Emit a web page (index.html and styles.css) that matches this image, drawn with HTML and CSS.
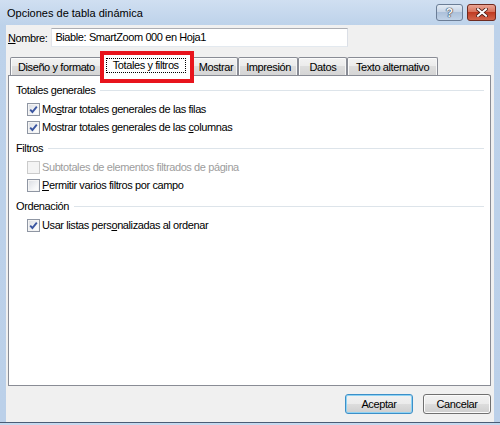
FILE: index.html
```html
<!DOCTYPE html>
<html lang="es">
<head>
<meta charset="utf-8">
<title>Opciones de tabla dinámica</title>
<link rel="stylesheet" href="styles.css">
</head>
<body>
<div class="window">
  <div class="titlebar">
    <span class="title">Opciones de tabla dinámica</span>
    <span class="ctl ctl-help"><span class="help-mark">?</span></span>
    <span class="ctl ctl-close"><svg width="12" height="9" viewBox="0 0 12 9"><path d="M2 1.2 L10 7.8 M10 1.2 L2 7.8" stroke="#4a1d16" stroke-width="3.6" stroke-linecap="square" fill="none"/><path d="M2 1.2 L10 7.8 M10 1.2 L2 7.8" stroke="#ffffff" stroke-width="2" stroke-linecap="square" fill="none"/></svg></span>
  </div>
  <div class="client">
    <div class="name-row">
      <span class="label"><u>N</u>ombre:</span>
      <div class="textbox">Biable: SmartZoom 000 en Hoja1</div>
    </div>
    <div class="tabs">
      <div class="tab">Diseño y formato</div>
      <div class="tab selected"><span class="focus">Totales y filtros</span><span class="highlight"></span></div>
      <div class="tab tab-compact">Mostrar</div>
      <div class="tab">Impresión</div>
      <div class="tab">Datos</div>
      <div class="tab tab-wide">Texto alternativo</div>
    </div>
    <div class="panel">
      <div class="group">
        <div class="group-head"><span>Totales generales</span><span class="rule"></span></div>
        <div class="row"><span class="box checked"><svg width="11" height="11" viewBox="0 0 11 11"><path d="M2.2 5.6 L4.4 8 L8.8 2.6" stroke="#3a55a0" stroke-width="1.9" fill="none"/></svg></span><span>Mo<u>s</u>trar totales generales de las filas</span></div>
        <div class="row"><span class="box checked"><svg width="11" height="11" viewBox="0 0 11 11"><path d="M2.2 5.6 L4.4 8 L8.8 2.6" stroke="#3a55a0" stroke-width="1.9" fill="none"/></svg></span><span>Mostrar totales generales de las <u>c</u>olumnas</span></div>
      </div>
      <div class="group">
        <div class="group-head"><span>Filtros</span><span class="rule"></span></div>
        <div class="row disabled"><span class="box"></span><span>Subtotales de elementos filtrados de página</span></div>
        <div class="row"><span class="box"></span><span><u>P</u>ermitir varios filtros por campo</span></div>
      </div>
      <div class="group">
        <div class="group-head"><span>Ordenación</span><span class="rule"></span></div>
        <div class="row"><span class="box checked"><svg width="11" height="11" viewBox="0 0 11 11"><path d="M2.2 5.6 L4.4 8 L8.8 2.6" stroke="#3a55a0" stroke-width="1.9" fill="none"/></svg></span><span>Usar listas pers<u>o</u>nalizadas al ordenar</span></div>
      </div>
    </div>
    <div class="buttons">
      <div class="btn default">Aceptar</div>
      <div class="btn">Cancelar</div>
    </div>
  </div>
</div>
</body>
</html>
```
FILE: styles.css
```css
* { box-sizing: border-box; }
html, body { margin: 0; padding: 0; }
body {
  width: 500px;
  height: 425px;
  overflow: hidden;
  background: #c6d9ee;
  font-family: "Liberation Sans", Arial, sans-serif;
  font-size: 11px;
  letter-spacing: -0.4px;
  color: #000;
}
u { text-decoration: underline; text-underline-offset: 1px; }

.window {
  height: 423px;
  display: flex;
  flex-direction: column;
  background: linear-gradient(#d0dff1, #bdd2ea 25px, #bbd0e9);
  border-bottom: 1px solid #4a5c75;
}

/* title bar */
.titlebar {
  height: 25px;
  flex: none;
  display: flex;
  align-items: flex-start;
  gap: 4px;
  padding: 4px 4px 0 7px;
}
.title {
  flex: 1;
  margin-top: 2px;
  line-height: 14px;
  font-size: 11px;
  letter-spacing: 0;
  color: #000;
}
.ctl {
  height: 17px;
  border-radius: 3px;
  display: flex;
  align-items: center;
  justify-content: center;
}
.ctl-help {
  width: 27px;
  border: 1px solid #6b7d96;
  background-color: #bccde2;
  background-image: linear-gradient(#e3ebf5, #c8d5e6 45%, #adc1da 50%, #c0d2e7);
}
.ctl-close {
  width: 29px;
  border: 1px solid #6e2a1f;
  background-color: #c7452c;
  background-image: linear-gradient(#eaa595, #d8735c 45%, #c03b22 50%, #d2654b);
}
.help-mark {
  font-size: 12px;
  font-weight: bold;
  letter-spacing: 0;
  line-height: 14px;
  color: #f4f6f9;
  text-shadow: 0 0 1px #2e3848, 0 0 1px #2e3848, 0 0 1px #2e3848;
}

/* client area */
.client {
  flex: 1;
  margin: 0 6px;
  background: #f0f0f0;
  display: flex;
  flex-direction: column;
}
.name-row {
  display: flex;
  align-items: center;
  gap: 4px;
  padding: 3px 0 0 2px;
  height: 22px;
  flex: none;
}
.textbox {
  width: 297px;
  height: 19px;
  border: 1px solid;
  border-color: #abadb3 #dbdfe6 #e3e9ef #e2e3ea;
  background: #fff;
  padding: 0 3px;
  line-height: 17px;
}

/* tabs */
.tabs {
  display: flex;
  align-items: flex-end;
  height: 18px;
  margin-top: 10px;
  padding-left: 4px;
  flex: none;
}
.tab {
  min-width: 49px;
  height: 18px;
  padding: 2px 6px 0 7px;
  line-height: 14px;
  text-align: center;
  border: 1px solid #898c95;
  border-bottom: none;
  border-radius: 2px 2px 0 0;
  background: linear-gradient(#f3f3f3, #ebebeb 50%, #dddddd 50%, #d5d5d5);
  box-shadow: inset 1px 1px 0 #fbfbfb, inset -1px 0 0 #f6f6f6;
  white-space: nowrap;
}
.tab-compact {
  min-width: 0;
  padding: 2px 4px 0 6px;
}
.tab-wide { padding: 2px 8px 0 8px; }
.tab.selected {
  position: relative;
  z-index: 2;
  height: 22px;
  margin: 0 -2px -1px -2px;
  padding: 3px 7px 0 5px;
  background: #fff;
  box-shadow: none;
}
.focus {
  display: inline-block;
  border: 1px dotted #000;
  padding: 0 6px;
  line-height: 13px;
}
.highlight {
  position: absolute;
  left: -1px;
  right: -1px;
  top: -4px;
  bottom: -7px;
  border: 4px solid #e8141c;
  pointer-events: none;
}

/* panel */
.panel {
  flex: 1;
  margin: 0 3px 0 2px;
  border: 1px solid #898c95;
  background: #fff;
  padding: 5px 6px 0 7px;
}
.group + .group { margin-top: 3px; }
.group-head {
  display: flex;
  align-items: center;
  height: 18px;
  margin-bottom: 1px;
}
.rule {
  flex: 1;
  height: 1px;
  margin-left: 5px;
  background: #dde4ea;
}
.row {
  display: flex;
  align-items: center;
  gap: 2px;
  height: 18px;
  padding-left: 11px;
}
.box {
  width: 13px;
  height: 13px;
  flex: none;
  border: 1px solid #8f96a3;
  background: linear-gradient(135deg, #d9dce1, #f7f8f9 70%, #ffffff);
  box-shadow: inset 0 0 0 1px #f4f4f4;
  display: flex;
  align-items: center;
  justify-content: center;
}
.row.disabled { color: #9d9d9d; }
.row.disabled .box {
  border-color: #cbcbcb;
  background: #f4f4f4;
}

/* buttons */
.buttons {
  display: flex;
  justify-content: flex-end;
  gap: 10px;
  margin-top: 8px;
  padding: 0 3px 8px 0;
  flex: none;
}
.btn {
  width: 68px;
  height: 20px;
  border: 1px solid #707070;
  border-radius: 3px;
  background: linear-gradient(#f2f2f2, #ebebeb 50%, #dddddd 50%, #cfcfcf);
  box-shadow: inset 0 0 0 1px #fbfbfb;
  text-align: center;
  line-height: 18px;
}
.btn.default {
  border-color: #3c8fc8;
  box-shadow: inset 0 0 0 1px #8fd3f4;
}
```
